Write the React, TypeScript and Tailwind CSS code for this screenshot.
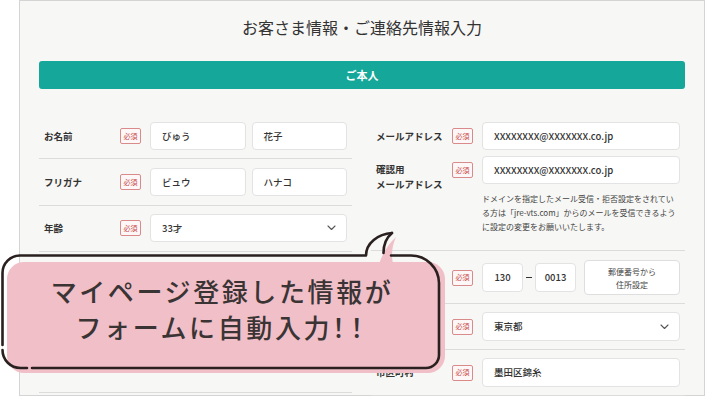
import React from "react";

const Badge = ({ className = "" }: { className?: string }) => (
  <span
    className={
      "flex h-[16px] w-[21px] shrink-0 items-center justify-center rounded-[2px] border border-[#d98b8b] bg-[#fdf7f7] text-[7px] leading-none text-[#c94a4a] " +
      className
    }
  >
    必須
  </span>
);

const Box = ({
  children,
  className = "",
}: {
  children?: React.ReactNode;
  className?: string;
}) => (
  <div
    className={
      "flex items-center rounded-[4px] border border-[#e3e3e3] bg-white text-[9.5px] font-medium text-[#333] " +
      className
    }
  >
    {children}
  </div>
);

const Chevron = () => (
  <svg width="9" height="6" viewBox="0 0 9 6" className="ml-auto mr-[10px]">
    <polyline points="1,1 4.5,4.5 8,1" fill="none" stroke="#555" strokeWidth="1.1" strokeLinecap="round" strokeLinejoin="round" />
  </svg>
);

const Label = ({ children }: { children?: React.ReactNode }) => (
  <div className="w-[76px] shrink-0 text-[9.5px] font-bold leading-[15px] text-[#333]">{children}</div>
);

export default function App() {
  return (
    <div className="relative h-[396px] w-[706px] overflow-hidden bg-white font-['Noto_Sans_CJK_JP',sans-serif]">
      <div className="ml-[19px] h-[396px] w-[686px] border border-[#d4d4d4] bg-[#f7f7f5] px-[19px]">
        <h1 className="pt-[14px] text-center text-[16px] leading-[24px] text-[#333]">
          お客さま情報・ご連絡先情報入力
        </h1>
        <div className="mt-[22px] flex h-[28px] items-center justify-center rounded-[3px] bg-[#15a89a] text-[11px] font-bold text-white">
          ご本人
        </div>

        <div className="mt-[24px] grid grid-cols-[313px_314px] gap-x-[19px]">
          {/* left column */}
          <div className="flex flex-col">
            <div className="flex items-center border-b border-[#dcdcdc] px-[5px] pb-[8px] pt-[9px]">
              <Label>お名前</Label>
              <Badge />
              <div className="ml-[9px] flex flex-1 gap-[6px]">
                <Box className="h-[28px] flex-1 pl-[11px]">びゅう</Box>
                <Box className="h-[28px] flex-1 pl-[11px]">花子</Box>
              </div>
            </div>
            <div className="flex items-center border-b border-[#dcdcdc] px-[5px] pb-[9px] pt-[9px]">
              <Label>フリガナ</Label>
              <Badge />
              <div className="ml-[9px] flex flex-1 gap-[6px]">
                <Box className="h-[28px] flex-1 pl-[11px]">ビュウ</Box>
                <Box className="h-[28px] flex-1 pl-[11px]">ハナコ</Box>
              </div>
            </div>
            <div className="flex items-center border-b border-[#dcdcdc] px-[5px] pb-[9px] pt-[8px]">
              <Label>年齢</Label>
              <Badge />
              <Box className="ml-[9px] h-[28px] flex-1 pl-[11px]">
                33才
                <Chevron />
              </Box>
            </div>
            <div className="h-[47px] border-b border-[#dcdcdc]" />
            <div className="h-[47px] border-b border-[#dcdcdc]" />
            <div className="h-[47px] border-b border-[#dcdcdc]" />
          </div>

          {/* right column */}
          <div className="flex flex-col">
            <div className="flex flex-col border-b border-[#dcdcdc] px-[5px] pb-[16px] pt-[9px]">
              <div className="flex items-center">
                <Label>メールアドレス</Label>
                <Badge />
                <Box className="ml-[9px] h-[28px] flex-1 pl-[11px]">XXXXXXXX@XXXXXXX.co.jp</Box>
              </div>
              <div className="mt-[6px] flex h-[28px] items-start">
                <div className="mt-[6px] w-[76px] shrink-0 text-[9.5px] font-bold leading-[15px] text-[#333]">
                  確認用
                  <br />
                  メールアドレス
                </div>
                <Badge className="mt-[6px]" />
                <Box className="ml-[9px] h-[28px] flex-1 pl-[11px]">XXXXXXXX@XXXXXXX.co.jp</Box>
              </div>
              <p className="ml-[106px] mt-[8px] text-[8px] leading-[14px] text-[#444]">
                ドメインを指定したメール受信・拒否設定をされてい
                <br />
                る方は「jre-vts.com」からのメールを受信できるよう
                <br />
                に設定の変更をお願いいたします。
              </p>
            </div>
            <div className="flex items-center border-b border-[#dcdcdc] px-[5px] pb-[8px] pt-[9px]">
              <Label />
              <Badge />
              <Box className="ml-[9px] h-[29px] w-[41px] justify-center">130</Box>
              <span className="mx-[3px] h-[1.5px] w-[6px] bg-[#333]" />
              <Box className="h-[29px] w-[41px] justify-center">0013</Box>
              <div className="ml-auto flex h-[35px] w-[96px] flex-col items-center justify-center rounded-[4px] border border-[#dedede] bg-white text-[8px] leading-[13px] text-[#444]">
                <span>郵便番号から</span>
                <span>住所設定</span>
              </div>
            </div>
            <div className="flex items-center border-b border-[#dcdcdc] px-[5px] pb-[8px] pt-[8px]">
              <Label />
              <Badge />
              <Box className="ml-[9px] h-[29px] flex-1 pl-[11px]">
                東京都
                <Chevron />
              </Box>
            </div>
            <div className="flex items-center border-b border-[#dcdcdc] px-[5px] pb-[8px] pt-[8px]">
              <Label>市区町村</Label>
              <Badge />
              <Box className="ml-[9px] h-[29px] flex-1 pl-[11px]">墨田区錦糸</Box>
            </div>
          </div>
        </div>
      </div>

      {/* speech bubble overlay */}
      <svg
        className="pointer-events-none absolute left-0 top-0"
        width="706"
        height="396"
        viewBox="0 0 706 396"
      >
        <rect x="7" y="262" width="438" height="111" rx="17" fill="#f1bfc8" />
        <path d="M379 264 Q385 247 396 237 Q390 250 393 264 Z" fill="#f1bfc8" />
        <g fill="none" stroke="#2a2020" strokeWidth="2.6" strokeLinecap="round" strokeLinejoin="round">
          <path d="M392 233 C378 234 366 243 366 255.5 L20 255.5 A17.5 17.5 0 0 0 2.5 273 L2.5 345" />
          <path d="M2.5 350 A18 18 0 0 0 20.5 368 L27 368" />
          <path d="M32 368 L426 368 A13 13 0 0 0 439 355 L439 283 A28 28 0 0 0 411 255.5 L391 255.5" />
          <path d="M392 233 C386 238 383.5 245 383.5 253" />
        </g>
      </svg>
      <div className="absolute left-[2px] top-[252px] flex h-[113px] w-[440px] flex-col items-center justify-center text-center text-[26px] font-medium leading-[36px] tracking-[0.1em] text-[#3a3434]">
        <span>マイページ登録した情報が</span>
        <span>
          フォームに自動入力<span className="tracking-[0.2em] [font-feature-settings:'palt']">！！</span>
        </span>
      </div>
    </div>
  );
}
